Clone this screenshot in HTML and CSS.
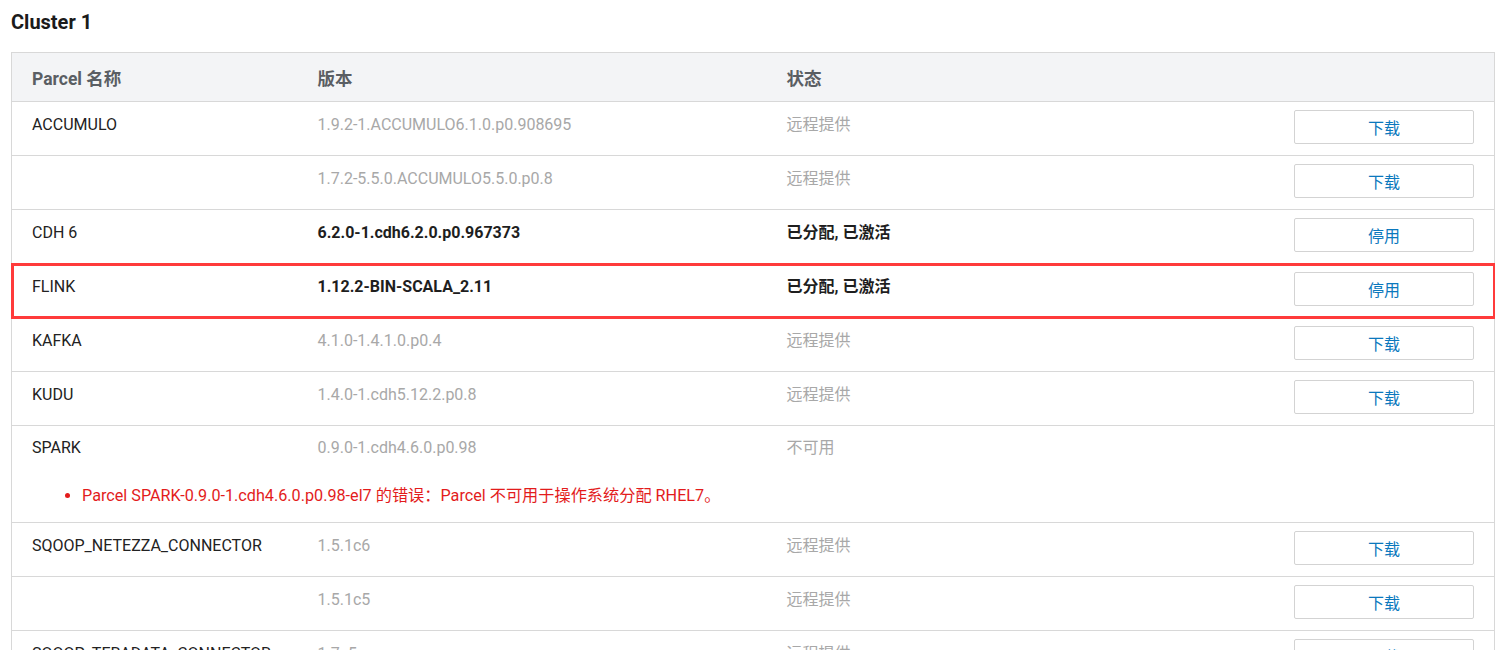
FILE: index.html
```html
<!DOCTYPE html>
<html lang="zh">
<head>
<meta charset="utf-8">
<title>Parcels</title>
<link rel="stylesheet" href="styles.css">
</head>
<body>
<div class="page">
  <h2 class="title">Cluster 1</h2>
  <table class="parcels">
    <colgroup>
      <col class="c-name">
      <col class="c-ver">
      <col class="c-state">
      <col class="c-act">
    </colgroup>
    <thead>
      <tr><th>Parcel 名称</th><th>版本</th><th>状态</th><th></th></tr>
    </thead>
    <tbody>
      <tr>
        <td class="name">ACCUMULO</td>
        <td class="muted">1.9.2-1.ACCUMULO6.1.0.p0.908695</td>
        <td class="muted">远程提供</td>
        <td class="act"><button class="btn">下载</button></td>
      </tr>
      <tr>
        <td class="name"></td>
        <td class="muted">1.7.2-5.5.0.ACCUMULO5.5.0.p0.8</td>
        <td class="muted">远程提供</td>
        <td class="act"><button class="btn">下载</button></td>
      </tr>
      <tr>
        <td class="name">CDH 6</td>
        <td class="strong">6.2.0-1.cdh6.2.0.p0.967373</td>
        <td class="strong">已分配, 已激活</td>
        <td class="act"><button class="btn">停用</button></td>
      </tr>
      <tr class="highlight">
        <td class="name">FLINK</td>
        <td class="strong">1.12.2-BIN-SCALA_2.11</td>
        <td class="strong">已分配, 已激活</td>
        <td class="act"><button class="btn">停用</button></td>
      </tr>
      <tr>
        <td class="name">KAFKA</td>
        <td class="muted">4.1.0-1.4.1.0.p0.4</td>
        <td class="muted">远程提供</td>
        <td class="act"><button class="btn">下载</button></td>
      </tr>
      <tr>
        <td class="name">KUDU</td>
        <td class="muted">1.4.0-1.cdh5.12.2.p0.8</td>
        <td class="muted">远程提供</td>
        <td class="act"><button class="btn">下载</button></td>
      </tr>
      <tr class="has-error">
        <td class="name">SPARK</td>
        <td class="muted">0.9.0-1.cdh4.6.0.p0.98</td>
        <td class="muted">不可用</td>
        <td class="act"></td>
      </tr>
      <tr class="error-row">
        <td colspan="4">
          <ul class="errors">
            <li>Parcel SPARK-0.9.0-1.cdh4.6.0.p0.98-el7 的错误：Parcel 不可用于操作系统分配 RHEL7。</li>
          </ul>
        </td>
      </tr>
      <tr>
        <td class="name">SQOOP_NETEZZA_CONNECTOR</td>
        <td class="muted">1.5.1c6</td>
        <td class="muted">远程提供</td>
        <td class="act"><button class="btn">下载</button></td>
      </tr>
      <tr>
        <td class="name"></td>
        <td class="muted">1.5.1c5</td>
        <td class="muted">远程提供</td>
        <td class="act"><button class="btn">下载</button></td>
      </tr>
      <tr>
        <td class="name">SQOOP_TERADATA_CONNECTOR</td>
        <td class="muted">1.7c5</td>
        <td class="muted">远程提供</td>
        <td class="act"><button class="btn">下载</button></td>
      </tr>
    </tbody>
  </table>
</div>
</body>
</html>
```
FILE: styles.css
```css
html, body {
  margin: 0;
  padding: 0;
  background: #fff;
}
body {
  font-family: Roboto, "Noto Sans CJK SC", sans-serif;
  font-size: 16px;
  color: #222;
  overflow: hidden;
}
.page {
  padding: 0 0 0 11px;
}
.title {
  margin: 0;
  height: 52px;
  padding-top: 9px;
  box-sizing: border-box;
  font-size: 20px;
  font-weight: 700;
  line-height: 26px;
  color: #1b1b1b;
}
.parcels {
  width: 1484px;
  border-collapse: collapse;
  table-layout: fixed;
  border: 1px solid #d8d8d8;
}
.c-name { width: 286px; }
.c-ver { width: 469px; }
.c-state { width: auto; }
.c-act { width: 220px; }

.parcels thead th {
  background: #f3f4f6;
  height: 48px;
  padding: 0 20px;
  text-align: left;
  font-size: 17.5px;
  font-weight: 700;
  color: #5a5e63;
  border-bottom: 1px solid #d8d8d8;
  vertical-align: middle;
}
.parcels tbody td {
  height: 54px;
  box-sizing: border-box;
  padding: 13px 20px 0;
  line-height: 20px;
  vertical-align: top;
  border-bottom: 1px solid #d8d8d8;
  white-space: nowrap;
}
.parcels td.name { color: #222; }
.parcels td.muted { color: #a8a8a8; }
.parcels td.strong { color: #1e1e1e; font-weight: 700; }
.parcels td.act {
  padding: 8px 20px 0 0;
  text-align: right;
}
.btn {
  width: 180px;
  height: 34px;
  background: #fff;
  border: 1px solid #d3d3d3;
  border-radius: 2px;
  font-family: Roboto, "Noto Sans CJK SC", sans-serif;
  font-size: 16px;
  color: #0b78bd;
  padding: 0;
  cursor: pointer;
}
.parcels tr.highlight {
  outline: 3px solid #ff3b3b;
  outline-offset: -2px;
}

.parcels tr.has-error td {
  border-bottom: none;
  height: 48px;
  padding-top: 12px;
}
.parcels tr.error-row td {
  height: 49px;
  padding: 12px 20px 0;
  vertical-align: top;
}
.errors {
  margin: 0;
  padding: 0 0 0 50px;
  color: #e31c1c;
  font-size: 16.2px;
  line-height: 20px;
}
.errors li::marker { color: #e31c1c; }
```
